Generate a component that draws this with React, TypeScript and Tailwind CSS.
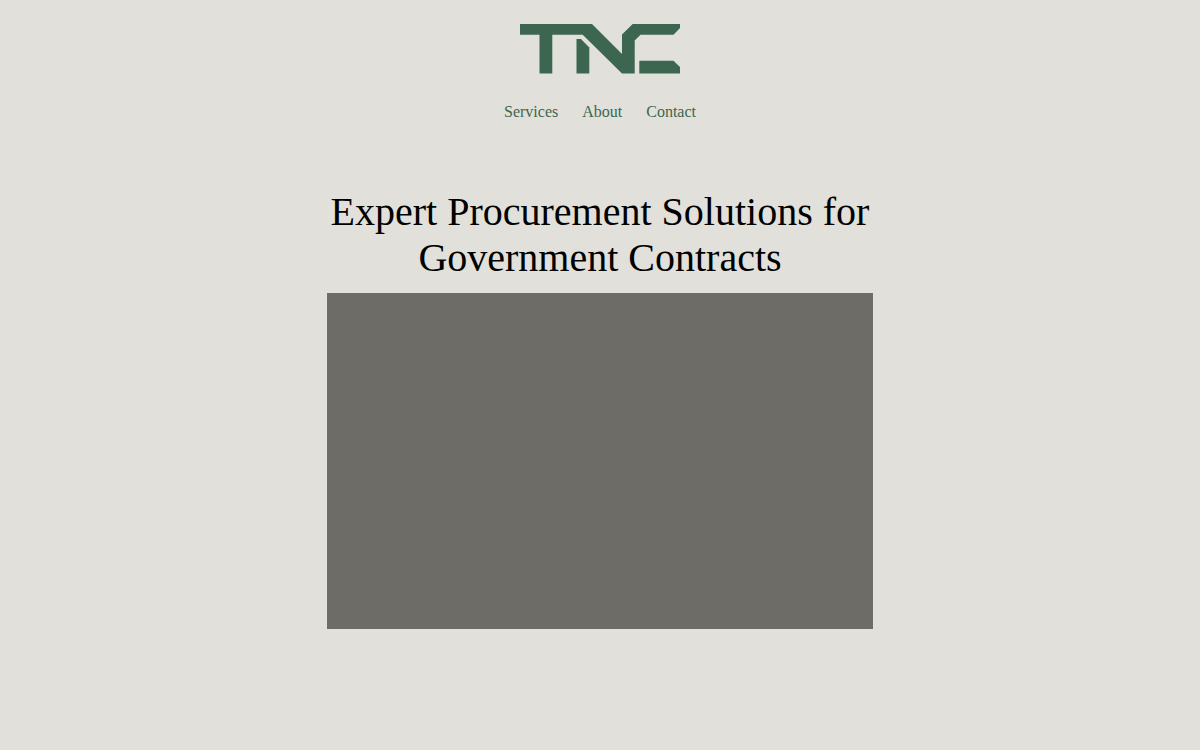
const links = [
  { label: 'Services', href: '#services' },
  { label: 'About', href: '#about' },
  { label: 'Contact', href: '#contact' },
];

export default function App() {
  return (
    <div className="min-h-screen bg-[#e1e0da] font-['Liberation_Serif',serif]">
      <header className="flex flex-col items-center pt-6">
        <a href="#home" aria-label="TNC home">
          <Logo />
        </a>
        <nav className="mt-6 flex gap-6 pt-0.5 pb-px">
          {links.map((link) => (
            <a key={link.href} href={link.href} className="text-base text-[#3d664f] hover:underline">
              {link.label}
            </a>
          ))}
        </nav>
      </header>

      {/* Hero */}
      <main className="mx-auto mt-16 max-w-[546px] pb-16">
        <h1 className="text-center text-[40px] leading-[46px] text-black">
          Expert Procurement Solutions for Government Contracts
        </h1>
        <div className="mt-3 aspect-[13/8] bg-[#6d6c67]" />
      </main>
    </div>
  );
}

function Logo() {
  return (
    <svg viewBox="0 0 160 50" className="h-[50px] w-40" fill="#3d6650" aria-hidden="true">
      <path d="M0 0H72L102 30V10.5L112.7 0H160V4L153.5 10.7H120.5L114.7 16.5V49.6H102L62.7 10.7H32.3V49.6H19.5V10.7H0Z" />
      <path d="M56.5 15H61L69.3 23.5V49.6H56.5Z" />
      <path d="M119.3 36.8H153.5L160 43V49.6H119.3Z" />
    </svg>
  );
}
